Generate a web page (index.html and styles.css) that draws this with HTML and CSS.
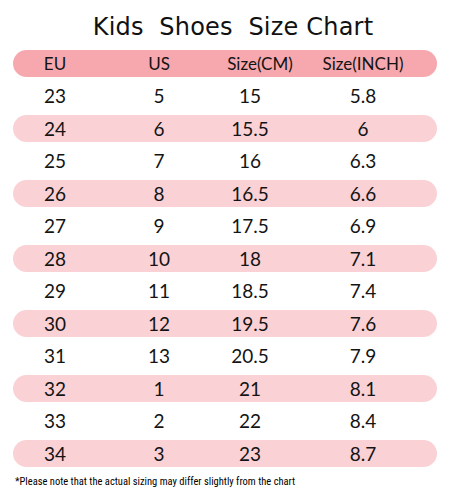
FILE: index.html
```html
<!DOCTYPE html>
<html>
<head>
<meta charset="utf-8">
<link rel="stylesheet" href="styles.css">
</head>
<body>
<div class="page">
  <h1 class="title">Kids&nbsp; Shoes&nbsp; Size Chart</h1>
  <div class="table">
    <div class="row head">
      <div class="cell c1">EU</div><div class="cell c2">US</div><div class="cell c3">Size(CM)</div><div class="cell c4">Size(INCH)</div>
    </div>
    <div class="row"><div class="cell c1">23</div><div class="cell c2">5</div><div class="cell c3">15</div><div class="cell c4">5.8</div></div>
    <div class="row band"><div class="cell c1">24</div><div class="cell c2">6</div><div class="cell c3">15.5</div><div class="cell c4">6</div></div>
    <div class="row"><div class="cell c1">25</div><div class="cell c2">7</div><div class="cell c3">16</div><div class="cell c4">6.3</div></div>
    <div class="row band"><div class="cell c1">26</div><div class="cell c2">8</div><div class="cell c3">16.5</div><div class="cell c4">6.6</div></div>
    <div class="row"><div class="cell c1">27</div><div class="cell c2">9</div><div class="cell c3">17.5</div><div class="cell c4">6.9</div></div>
    <div class="row band"><div class="cell c1">28</div><div class="cell c2">10</div><div class="cell c3">18</div><div class="cell c4">7.1</div></div>
    <div class="row"><div class="cell c1">29</div><div class="cell c2">11</div><div class="cell c3">18.5</div><div class="cell c4">7.4</div></div>
    <div class="row band"><div class="cell c1">30</div><div class="cell c2">12</div><div class="cell c3">19.5</div><div class="cell c4">7.6</div></div>
    <div class="row"><div class="cell c1">31</div><div class="cell c2">13</div><div class="cell c3">20.5</div><div class="cell c4">7.9</div></div>
    <div class="row band"><div class="cell c1">32</div><div class="cell c2">1</div><div class="cell c3">21</div><div class="cell c4">8.1</div></div>
    <div class="row"><div class="cell c1">33</div><div class="cell c2">2</div><div class="cell c3">22</div><div class="cell c4">8.4</div></div>
    <div class="row band"><div class="cell c1">34</div><div class="cell c2">3</div><div class="cell c3">23</div><div class="cell c4">8.7</div></div>
  </div>
  <p class="note">*Please note that the actual sizing may differ slightly from the chart</p>
</div>
</body>
</html>
```
FILE: styles.css
```css
html, body {
  margin: 0;
  padding: 0;
  background: #ffffff;
}
.page {
  width: 450px;
  height: 500px;
  display: flex;
  flex-direction: column;
  color: #141414;
}
.title {
  margin: 0;
  height: 49.5px;
  box-sizing: border-box;
  padding-top: 9px;
  font-family: "DejaVu Sans", sans-serif;
  font-weight: normal;
  font-size: 24px;
  letter-spacing: 0.2px;
  line-height: 36px;
  text-align: center;
  padding-left: 16px;
  color: #111;
}
.table {
  display: flex;
  flex-direction: column;
  gap: 5.5px;
  margin: 0 13px;
}
.row {
  height: 27px;
  display: flex;
  align-items: center;
  border-radius: 13.5px;
  font-family: "Lato", sans-serif;
  font-size: 19px;
  line-height: 27px;
}
.head {
  background: #f6a8ae;
  font-size: 17px;
}
.band {
  background: #fad1d5;
}
.cell {
  width: 80px;
  display: flex;
  justify-content: center;
  white-space: nowrap;
}
.c1 { margin-left: 2px; }
.c2 { margin-left: 24px; }
.c3 { margin-left: 11px; }
.c4 { margin-left: 33px; }
.head .c3 { margin-left: 21px; }
.head .c4 { margin-left: 23px; }
.note {
  margin: 8px 0 0 15px;
  font-family: "Liberation Sans Narrow", "Roboto Condensed", "Liberation Sans", sans-serif;
  font-size: 10.5px;
  line-height: 14px;
  color: #000;
}
```
